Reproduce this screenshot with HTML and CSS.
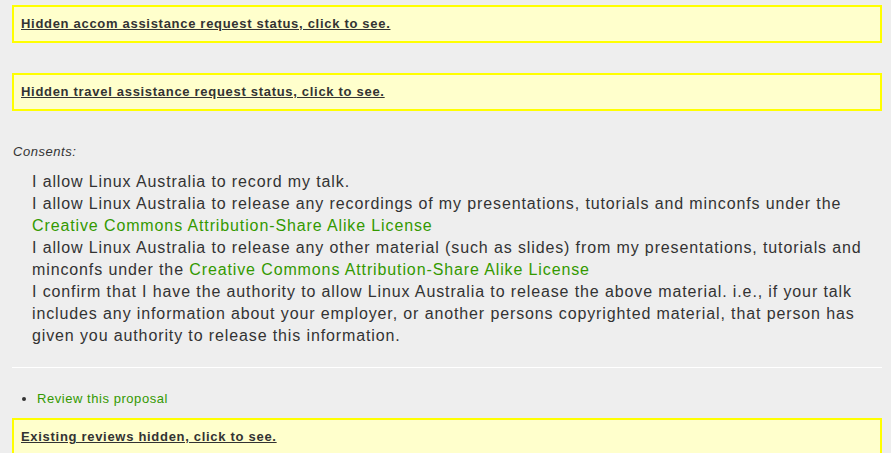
FILE: index.html
```html
<!DOCTYPE html>
<html>
<head>
<meta charset="utf-8">
<link rel="stylesheet" href="styles.css">
</head>
<body>
<div class="page">
  <div class="hidden-box"><a href="#" class="toggle">Hidden accom assistance request status, click to see.</a></div>
  <div class="hidden-box second"><a href="#" class="toggle">Hidden travel assistance request status, click to see.</a></div>
  <p class="label">Consents:</p>
  <div class="consents">
    <div>I allow Linux Australia to record my talk.</div>
    <div>I allow Linux Australia to release any recordings of my presentations, tutorials and minconfs under the <a href="#" class="lnk">Creative Commons Attribution-Share Alike License</a></div>
    <div>I allow Linux Australia to release any other material (such as slides) from my presentations, tutorials and minconfs under the <a href="#" class="lnk">Creative Commons Attribution-Share Alike License</a></div>
    <div>I confirm that I have the authority to allow Linux Australia to release the above material. i.e., if your talk includes any information about your employer, or another persons copyrighted material, that person has given you authority to release this information.</div>
  </div>
  <hr class="rule">
  <ul class="actions">
    <li><a href="#" class="lnk">Review this proposal</a></li>
  </ul>
  <div class="hidden-box"><a href="#" class="toggle">Existing reviews hidden, click to see.</a></div>
</div>
</body>
</html>
```

FILE: styles.css
```css
html, body {
  margin: 0;
  padding: 0;
  background: #eeeeee;
}
body {
  font-family: "Liberation Sans", Arial, sans-serif;
  color: #333333;
}
.page {
  padding: 5px 9px 0 12px;
}
.hidden-box {
  background: #ffffcc;
  border: 2px solid #ffff00;
  padding: 8px 7px;
  line-height: 18px;
  font-size: 13px;
  font-weight: bold;
  letter-spacing: 0.7px;
}
.hidden-box.second {
  margin-top: 30px;
}
.toggle {
  color: #333333;
  text-decoration: underline;
}
.label {
  margin: 32px 0 0 1px;
  font-size: 13px;
  font-style: italic;
  line-height: 18px;
  letter-spacing: 0.55px;
}
.consents {
  margin: 10px 0 0 20px;
  font-size: 16px;
  line-height: 22px;
  letter-spacing: 0.88px;
}
.lnk {
  color: #339900;
  text-decoration: none;
}
.rule {
  border: 0;
  border-top: 1px solid #ffffff;
  margin: 20px 0 0 0;
  height: 0;
}
.actions {
  margin: 22px 0 10px 0;
  padding-left: 25px;
  font-size: 13px;
  line-height: 18px;
  letter-spacing: 0.55px;
}
```
